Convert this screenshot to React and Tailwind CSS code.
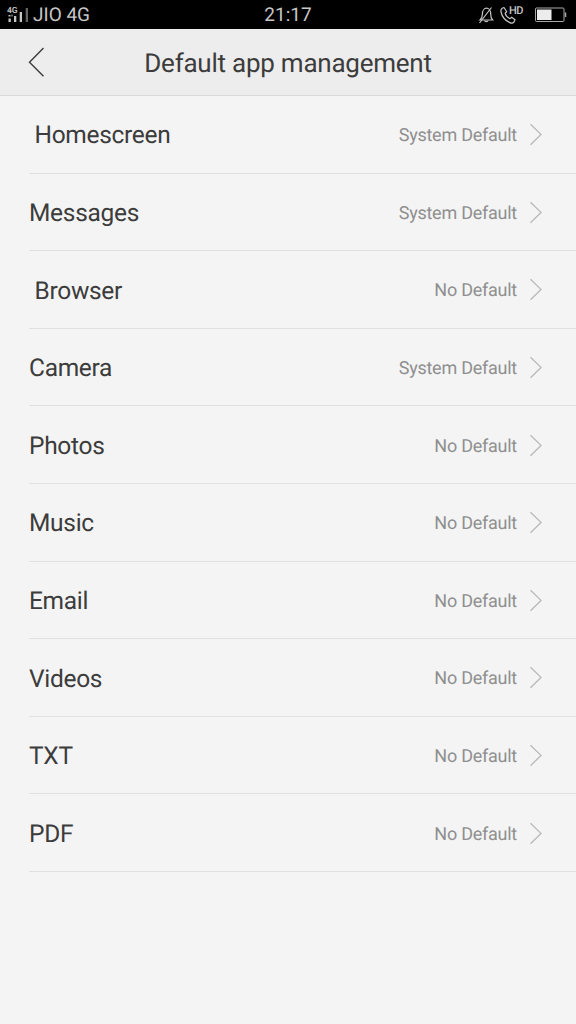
const items = [
  { name: 'Homescreen', value: 'System Default', indent: true },
  { name: 'Messages', value: 'System Default' },
  { name: 'Browser', value: 'No Default', indent: true },
  { name: 'Camera', value: 'System Default' },
  { name: 'Photos', value: 'No Default' },
  { name: 'Music', value: 'No Default' },
  { name: 'Email', value: 'No Default' },
  { name: 'Videos', value: 'No Default' },
  { name: 'TXT', value: 'No Default' },
  { name: 'PDF', value: 'No Default' },
];

function SignalIcon() {
  return (
    <div className="relative h-[14px] w-[22px]">
      <svg className="h-[14px] w-[22px]" viewBox="0 0 22 14" fill="currentColor">
        <path d="M1.500 7h2v1.500h-2zM4.500 6.500h1v2h-1zM1.500 10.500h2.300V14H1.500zM7 8h2.300v6H7zM12.700 4H15v10h-2.300z" />
        <path d="M18.700 0H21v14h-2.300z" opacity=".5" />
      </svg>
      <span className="absolute top-[-1px] left-0 text-[8.500px] leading-[8px] font-semibold">4G</span>
    </div>
  );
}

function MutedBellIcon() {
  return (
    <svg className="h-[18px] w-[16px]" viewBox="0 0 16 18" fill="none" stroke="currentColor" strokeWidth="1.2">
      <path d="M2 14h12.600c-1.700-1.600-1.900-2.800-1.900-6C12.700 4.500 10.700 2.200 8.500 2.200S4.400 4.500 4.400 8c0 3.200-.6 4.400-2.400 6z" />
      <path d="M6.500 14.500c.3 1.600 3.300 1.600 3.600 0M1.500 17L13.500 1.500" />
    </svg>
  );
}

function CallIcon() {
  return (
    <svg className="h-[18px] w-[16px]" viewBox="0 0 16 18" fill="none" stroke="currentColor" strokeWidth="1.2" strokeLinejoin="round">
      <path d="M2.200 2.300L4 1.500l2.700 4.200-1.600 1.500c.5 2.200 2.600 4.500 5 5.400l1.600-1.400L15 13.700l-1 2.200c-.8 1.200-2.500 1.500-4.200.7C5.600 14.700 2 10.500 1 6 .7 4.300 1.200 3 2.200 2.300z" />
    </svg>
  );
}

function StatusBar() {
  return (
    <div className="grid h-[29px] grid-cols-3 items-center bg-black text-[#c6c6c6]">
      <div className="flex items-center pl-[7px]">
        <SignalIcon />
        <span className="ml-[4px] pt-px text-[19px] leading-[28px]">JIO 4G</span>
      </div>
      <span className="pt-px text-center text-[19px] leading-[28px]">21:17</span>
      <div className="flex items-center justify-end pr-[9px]">
        <MutedBellIcon />
        <div className="ml-[6px] flex h-[18px]">
          <CallIcon />
          <span className="-ml-[7px] text-[11px] leading-[10px] font-medium tracking-[-0.500px]">HD</span>
        </div>
        <svg className="ml-[12px] h-[16px] w-[32px]" viewBox="0 0 32 16">
          <rect x="0.5" y="1" width="28.500" height="13.500" rx="1" fill="none" stroke="#a8a8a8" />
          <rect x="2" y="2.500" width="14.500" height="10.500" fill="#ececec" />
          <path d="M30.500 5.500v4.500" stroke="#a8a8a8" strokeWidth="1.500" />
        </svg>
      </div>
    </div>
  );
}

function Row({ item }) {
  return (
    <li className="ml-[29px] flex h-[77.6px] items-center border-b border-[#e0e0e0] pr-[33px]">
      <span className={`grow pt-[3px] text-[24.5px] tracking-[-0.3px] text-[#3c3c3c] ${item.indent ? 'pl-[5.5px]' : ''}`}>{item.name}</span>
      <span className="pt-[3px] text-[18px] tracking-[-0.25px] text-[#8f8f8f]">{item.value}</span>
      <svg className="mt-[2px] ml-[12px] h-[24px] w-[14px]" viewBox="0 0 14 24" fill="none" stroke="#b8b8b8" strokeWidth="1.300">
        <path d="M1.500 1.200L12 11.400 1.500 21.700" />
      </svg>
    </li>
  );
}

export default function App() {
  return (
    <div className="h-[1024px] w-[576px] overflow-hidden bg-[#f4f4f4] font-['Roboto',sans-serif] [text-rendering:geometricPrecision]">
      <StatusBar />
      <header className="grid h-[67px] grid-cols-[80px_1fr_80px] items-center border-b border-[#d9d9d9] bg-[#ededed]">
        <button type="button" className="pl-[27px]" aria-label="Back">
          <svg className="h-[30px] w-[18px]" viewBox="0 0 18 30" fill="none" stroke="#3c3c3c" strokeWidth="1.400">
            <path d="M16.500 1L2.500 15.200 16.500 29.300" />
          </svg>
        </button>
        <h1 className="pt-[4px] text-center text-[26px] tracking-[-0.24px] text-[#3c3c3c]">Default app management</h1>
      </header>
      <ul>
        {items.map((item) => (
          <Row key={item.name} item={item} />
        ))}
      </ul>
    </div>
  );
}
